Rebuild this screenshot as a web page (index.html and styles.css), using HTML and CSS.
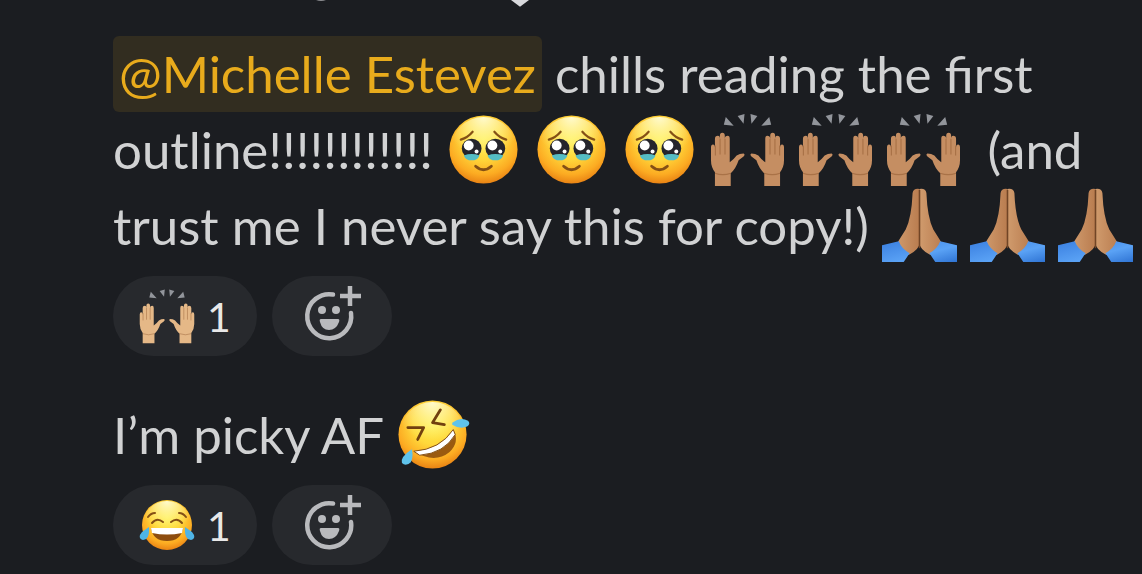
FILE: index.html
```
<!DOCTYPE html>
<html lang="en">
<head>
    <meta charset="UTF-8">
    <meta name="viewport" content="width=device-width, initial-scale=1.0">
    <title>Thread</title>
    <link rel="stylesheet" href="styles.css">
</head>
<body>

    <!-- Shared emoji drawings -->
    <svg class="sprite" aria-hidden="true">
        <defs>
            <radialGradient id="faceFill" cx="0.5" cy="0.35" r="0.65">
                <stop offset="0" stop-color="#fff04c"/>
                <stop offset="0.45" stop-color="#ffd83b"/>
                <stop offset="0.8" stop-color="#fcab22"/>
                <stop offset="1" stop-color="#e98314"/>
            </radialGradient>
            <radialGradient id="shine" cx="0.5" cy="0" r="0.6">
                <stop offset="0" stop-color="#fffbd0"/>
                <stop offset="1" stop-color="#fff9a0" stop-opacity="0"/>
            </radialGradient>
            <linearGradient id="sleeve" x1="0" x2="1" y1="0" y2="1">
                <stop offset="0" stop-color="#3a7fe0"/>
                <stop offset="0.6" stop-color="#5aa2f5"/>
                <stop offset="1" stop-color="#2f74d4"/>
            </linearGradient>
            <linearGradient id="palm" x1="0" x2="1" y1="0" y2="0">
                <stop offset="0" stop-color="#d09b6d"/>
                <stop offset="1" stop-color="#b97c4f"/>
            </linearGradient>

            <symbol id="moved" viewBox="0 0 76 76">
                <circle cx="38" cy="38" r="34.500" fill="url(#faceFill)"/>
                <circle cx="38" cy="38" r="33" fill="url(#shine)"/>
                <g fill="none" stroke="#845015" stroke-width="2.200" stroke-linecap="round">
                    <path d="M15 28Q22 26 27 20"/>
                    <path d="M61 28Q54 26 49 20"/>
                    <path d="M30 55Q38 62 46 55" stroke-width="2.800"/>
                </g>
                <circle cx="26" cy="37" r="10" fill="#25252c"/>
                <circle cx="50" cy="37" r="10" fill="#25252c"/>
                <path d="M18 44Q26 41 34 44Q32 49 26 49Q20 49 18 44ZM42 44Q50 41 58 44Q56 49 50 49Q44 49 42 44Z" fill="#55bdc4"/>
                <g fill="#fff">
                    <circle cx="23" cy="34" r="5"/>
                    <circle cx="47" cy="34" r="5"/>
                    <circle cx="31" cy="40" r="2"/>
                    <circle cx="55" cy="40" r="2"/>
                </g>
            </symbol>

            <symbol id="hand" viewBox="0 0 36 56">
                <path d="M5 55V41Q1 36 1 29V16Q1 13 3 13Q5 13 5 16V7Q5 4 8 4Q10 4 10 7V4Q10 1 12.500 1Q15 1 15 4V7Q15 4 18 4Q20 4 20 7V31Q24 28 27 24Q30 22 34 22Q36 23 34 25L29 29Q26 38 21 42V55Z" fill="currentColor"/>
                <path d="M5.500 14V24M10.200 7V23M15.200 7V23M5 42Q13 45 21 42" fill="none" stroke="#804820" stroke-opacity="0.400" stroke-width="1.200"/>
            </symbol>
            <symbol id="raised" viewBox="0 0 76 76">
                <path d="M16 5L24 14L14 13ZM28 4L35 2L34 12ZM41 2L48 4L42 12ZM60 5L62 13L52 14Z" fill="#92959b"/>
                <use href="#hand" x="0" y="20" width="36" height="56"/>
                <use href="#hand" x="0" y="20" width="36" height="56" transform="matrix(-1 0 0 1 76 0)"/>
            </symbol>

            <symbol id="pray" viewBox="0 0 76 76">
                <path d="M38 1Q32 0 31 5Q30 30 24 42L14 58L27 68Q38 62 38 56Z" fill="url(#palm)"/>
                <path d="M38 1Q44 0 45 5Q46 30 52 42L62 58L49 68Q38 62 38 56Z" fill="url(#palm)"/>
                <path d="M38 2V61" stroke="#714526" stroke-width="1.600"/>
                <path d="M0 61V58L17 54Q20 62 28 66L22 75H0ZM76 61V58L59 54Q56 62 48 66L54 75H76Z" fill="url(#sleeve)"/>
            </symbol>

            <symbol id="rofl" viewBox="0 0 76 76">
                <circle cx="37" cy="38" r="34.500" fill="url(#faceFill)"/>
                <circle cx="37" cy="38" r="33" fill="url(#shine)"/>
                <path d="M18 55Q45 53 58 33Q65 46 54 56Q39 68 18 55Z" fill="#9a5a10"/>
                <path d="M18 55Q45 53 58 33L60 38Q49 57 24 59Z" fill="#fff" stroke="#845015" stroke-width="1"/>
                <path d="M12 31L28 31L22 43M45 13L37 26L49 28" fill="none" stroke="#71400f" stroke-width="2.800" stroke-linecap="round" stroke-linejoin="round"/>
                <path d="M57 26Q65 20 73 24Q76 27 72 30Q65 33 57 28Z" fill="#5fc3eb"/>
                <path d="M16 53Q18 61 15 66Q10 71 6 67Q4 61 16 53Z" fill="#5fc3eb"/>
            </symbol>

            <symbol id="joy" viewBox="0 0 56 56">
                <circle cx="28" cy="28" r="25" fill="url(#faceFill)"/>
                <circle cx="28" cy="28" r="24" fill="url(#shine)"/>
                <path d="M12 31H44Q42 44 28 44Q14 44 12 31Z" fill="#8d4c0e"/>
                <path d="M12 31H44L43 36Q28 39 13 36Z" fill="#fff"/>
                <path d="M13 26Q18 20 24 25M32 25Q38 20 43 26M9 20Q12 16 16 16M47 20Q44 16 40 16" fill="none" stroke="#845015" stroke-width="2" stroke-linecap="round"/>
                <path d="M10 30Q11 43 4 43Q-2 41 3 35ZM46 30Q45 43 52 43Q58 41 53 35Z" fill="#4fb4e6"/>
            </symbol>

            <symbol id="addReaction" viewBox="-4 -4 64 64">
                <g fill="none" stroke="#b9babd" stroke-width="4.500">
                    <path d="M29 6.500A22 22 0 1 0 47 25" stroke-linecap="round"/>
                    <path d="M46 -2V18M36 8H57"/>
                </g>
                <circle cx="18" cy="22" r="4" fill="#b9babd"/>
                <circle cx="32" cy="22" r="4" fill="#b9babd"/>
                <path d="M17 31H34Q36 31 35 34Q32 42 25 42Q18 42 16 34Q15 31 17 31Z" fill="#b9babd"/>
            </symbol>
        </defs>
    </svg>

    <main class="thread">
        <!-- Tail of the previous message -->
        <div class="previous">
            <svg class="tail" viewBox="0 0 220 7" aria-hidden="true">
                <path d="M2 0H12Q7 2 2 0Z" fill="#8d8e91"/>
                <path d="M197 0H215L207 6Q206 7 205 6Z" fill="#d8d9dc"/>
            </svg>
        </div>

        <article class="message">
            <p class="text"><a class="mention" href="#">@Michelle Estevez</a> chills reading the first outline!!!!!!!!!!!! <svg class="emoji" role="img" aria-label="face holding back tears"><use href="#moved"/></svg> <svg class="emoji" role="img" aria-label="face holding back tears"><use href="#moved"/></svg> <svg class="emoji" role="img" aria-label="face holding back tears"><use href="#moved"/></svg> <svg class="emoji tan" role="img" aria-label="raised hands"><use href="#raised"/></svg> <svg class="emoji tan" role="img" aria-label="raised hands"><use href="#raised"/></svg> <svg class="emoji tan" role="img" aria-label="raised hands"><use href="#raised"/></svg> &nbsp;(and trust me I never say this for copy!) <svg class="emoji" role="img" aria-label="folded hands"><use href="#pray"/></svg> <svg class="emoji" role="img" aria-label="folded hands"><use href="#pray"/></svg> <svg class="emoji" role="img" aria-label="folded hands"><use href="#pray"/></svg></p>
            <div class="reactions">
                <button type="button" class="reaction"><svg class="reaction-emoji light" role="img" aria-label="raised hands"><use href="#raised"/></svg>1</button>
                <button type="button" class="reaction add" aria-label="Add reaction"><svg class="add-icon"><use href="#addReaction"/></svg></button>
            </div>
        </article>

        <article class="message">
            <p class="text">I’m picky AF <svg class="emoji" role="img" aria-label="rolling on the floor laughing"><use href="#rofl"/></svg></p>
            <div class="reactions">
                <button type="button" class="reaction"><svg class="reaction-emoji" role="img" aria-label="tears of joy"><use href="#joy"/></svg>1</button>
                <button type="button" class="reaction add" aria-label="Add reaction"><svg class="add-icon"><use href="#addReaction"/></svg></button>
            </div>
        </article>
    </main>

</body>
</html>
```
FILE: styles.css
```
/* Page */
body {
    margin: 0;
    background-color: #1b1d21;
    color: #d1d2d3;
    font-family: Lato, sans-serif;
    font-size: 51px;
    line-height: 76px;
}

.sprite {
    position: absolute;
    width: 0;
    height: 0;
}

.thread {
    padding-left: 113px;
}

.previous {
    height: 36px;
}

.tail {
    display: block;
    width: 220px;
    height: 7px;
    margin-left: 201px;
}

/* Messages */
.message + .message {
    margin-top: 41px;
}

.text {
    margin: 0;
}

.mention {
    display: inline-block;
    padding: 0 6px;
    border-radius: 6px;
    background-color: #322d20;
    color: #e8ab1c;
    text-decoration: none;
}

.emoji {
    width: 75px;
    height: 75px;
    vertical-align: top;
}

.tan {
    color: #c58e62;
}

.light {
    color: #e5b887;
}

/* Reactions */
.reactions {
    display: flex;
    gap: 15px;
    margin-top: 12px;
}

.reaction {
    display: flex;
    align-items: center;
    justify-content: center;
    gap: 12px;
    height: 80px;
    padding: 0 26px;
    border: none;
    border-radius: 40px;
    background-color: #27292d;
    color: #e8e8e8;
    font-family: inherit;
    font-size: 41px;
    cursor: pointer;
}

.add {
    padding: 0 28px;
}

.reaction-emoji {
    width: 56px;
    height: 56px;
}

.add-icon {
    width: 64px;
    height: 64px;
}
```
